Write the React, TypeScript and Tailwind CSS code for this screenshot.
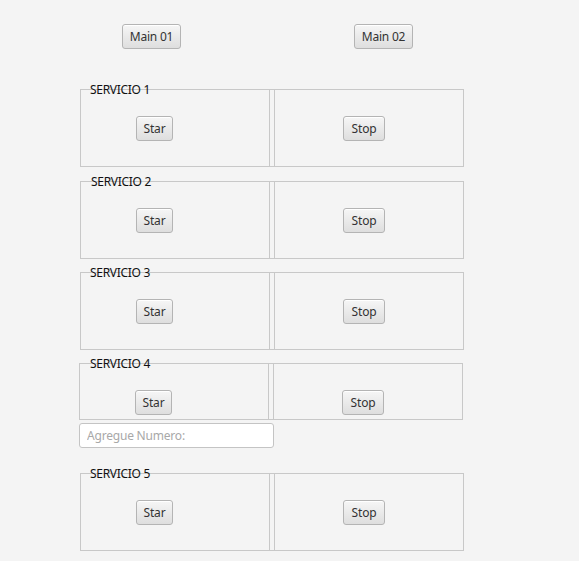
import React from "react";

const btn =
  "h-[25px] rounded-[3px] border border-[#b4b4b4] bg-gradient-to-b from-[#f6f6f6] to-[#dedede] text-[12px] tracking-[-0.2px] text-[#333] leading-none flex items-center justify-center shadow-[inset_0_1px_0_#fff]";

function Panel({
  title,
  h,
  ml,
  stopMl,
  titleLeft = "left-[9px]",
  className = "",
}: {
  title: string;
  h: string;
  ml: string;
  stopMl: string;
  titleLeft?: string;
  className?: string;
}) {
  return (
    <div className={`relative w-[384px] border border-[#c8c8c8] flex ${h} ${ml} ${className}`}>
      <span
        className={`absolute ${titleLeft} top-[-8px] text-[12px] tracking-[-0.3px] leading-[16px] text-[#111] whitespace-nowrap`}
      >
        {title}
      </span>
      <div className="w-[188px] pt-[26px] pl-[55px]">
        <button className={`${btn} w-[37px]`}>Star</button>
      </div>
      <div className="w-[6px] border-x border-[#c8c8c8]" />
      <div className={`flex-1 pt-[26px] ${stopMl}`}>
        <button className={`${btn} w-[42px]`}>Stop</button>
      </div>
    </div>
  );
}

export default function App() {
  return (
    <div
      className="w-[579px] h-[561px] bg-[#f4f4f4] overflow-hidden flex flex-col"
      style={{ fontFamily: '"Noto Sans", "Open Sans", sans-serif' }}
    >
      <div className="flex pt-[24px] pl-[122px]">
        <button className={`${btn} w-[59px]`}>Main 01</button>
        <button className={`${btn} w-[59px] ml-[173px]`}>Main 02</button>
      </div>
      <Panel title="SERVICIO 1" h="h-[78px]" ml="ml-[80px]" stopMl="pl-[68px]" className="mt-[40px]" />
      <Panel title="SERVICIO 2" h="h-[78px]" ml="ml-[80px]" stopMl="pl-[68px]" titleLeft="left-[10px]" className="mt-[14px]" />
      <Panel title="SERVICIO 3" h="h-[78px]" ml="ml-[80px]" stopMl="pl-[68px]" className="mt-[13px]" />
      <Panel title="SERVICIO 4" h="h-[57px]" ml="ml-[79px]" stopMl="pl-[68px]" titleLeft="left-[10px]" className="mt-[13px]" />
      <input
        placeholder="Agregue Numero:"
        className="ml-[79px] mt-[3px] w-[195px] h-[25px] rounded-[3px] border border-[#c4c4c4] bg-white px-[7px] text-[12px] tracking-[-0.2px] text-[#333] placeholder:text-[#a8a8a8] outline-none"
      />
      <Panel title="SERVICIO 5" h="h-[78px]" ml="ml-[80px]" stopMl="pl-[68px]" className="mt-[25px]" />
    </div>
  );
}
